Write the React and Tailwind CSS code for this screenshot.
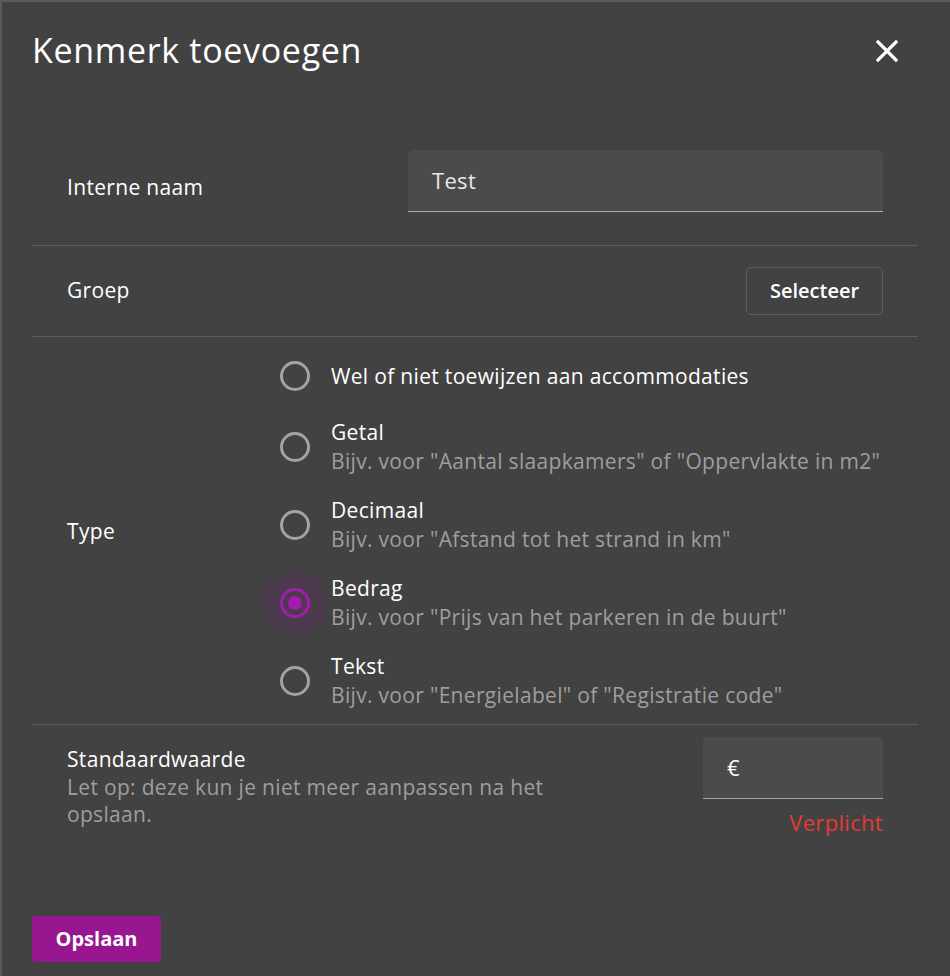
import React from "react";

const options = [
  { title: "Wel of niet toewijzen aan accommodaties" },
  { title: "Getal", desc: 'Bijv. voor "Aantal slaapkamers" of "Oppervlakte in m2"' },
  { title: "Decimaal", desc: 'Bijv. voor "Afstand tot het strand in km"' },
  { title: "Bedrag", desc: 'Bijv. voor "Prijs van het parkeren in de buurt"', checked: true },
  { title: "Tekst", desc: 'Bijv. voor "Energielabel" of "Registratie code"' },
];

function Radio({ checked }) {
  if (checked) {
    return (
      <div className="relative w-[30px] h-[30px] shrink-0">
        <div className="absolute left-[-17px] top-[-17px] w-[64px] h-[64px] rounded-full bg-[#4e3a4e]" />
        <div className="absolute inset-0 rounded-full border-[3px] border-[#a21caf] flex items-center justify-center">
          <div className="w-[14px] h-[14px] rounded-full bg-[#a21caf]" />
        </div>
      </div>
    );
  }
  return <div className="w-[30px] h-[30px] shrink-0 rounded-full border-[3px] border-[#a3a3a3]" />;
}

export default function App() {
  return (
    <div
      className="w-[950px] h-[976px] bg-[#424242] border-t-2 border-l-2 border-[#5a5a5a] flex flex-col text-white tracking-[0.02em]"
      style={{ fontFamily: "'Open Sans', Lato, sans-serif" }}
    >
      <div className="h-[128px] shrink-0 flex items-start justify-between pl-[30px] pr-[52px] pt-[24px]">
        <h1 className="text-[34px] leading-[48px] font-normal tracking-[0.02em]">Kenmerk toevoegen</h1>
        <svg className="mt-[14px]" width="22" height="22" viewBox="0 0 22 22">
          <path d="M2 2 L20 20 M20 2 L2 20" stroke="white" strokeWidth="3.2" strokeLinecap="square" />
        </svg>
      </div>

      <div className="ml-[30px] mr-[32px] flex flex-col">
        <div className="h-[116px] flex items-start border-b border-[#5c5c5c]">
          <div className="w-[376px] pl-[35px] h-[116px] flex items-center text-[21px] font-medium">Interne naam</div>
          <div className="mt-[20px] w-[475px] h-[62px] bg-[#4b4b4b] rounded-t-[5px] border-b border-[#a8a8a8] flex items-center pl-[24px] text-[22px] text-[#e8e8e8]">
            Test
          </div>
        </div>

        <div className="h-[91px] flex items-center justify-between border-b border-[#5c5c5c] pl-[35px] pr-[35px]">
          <div className="text-[21px] font-medium">Groep</div>
          <button className="w-[137px] h-[48px] border border-[#5e5e5e] rounded-[5px] text-[20px] font-semibold text-white tracking-normal">
            Selecteer
          </button>
        </div>

        <div className="flex items-center border-b border-[#5c5c5c] pt-[17px] pb-[14px]">
          <div className="w-[248px] pl-[35px] text-[21px] font-medium">Type</div>
          <div className="flex flex-col gap-[20px]">
            {options.map((o, i) => (
              <div key={i} className={`flex items-center gap-[21px] ${o.desc ? "h-[58px]" : "h-[44px]"}`}>
                <Radio checked={o.checked} />
                <div className="flex flex-col">
                  <div className="text-[21px] leading-[29px] font-medium">{o.title}</div>
                  {o.desc && <div className="text-[21px] leading-[29px] text-[#9e9e9e]">{o.desc}</div>}
                </div>
              </div>
            ))}
          </div>
        </div>

        <div className="flex justify-between pt-[12px] pl-[35px] pr-[35px]">
          <div className="w-[560px] pt-[8px]">
            <div className="text-[21px] leading-[29px] font-medium">Standaardwaarde</div>
            <div className="text-[21px] leading-[27px] text-[#9e9e9e]">
              Let op: deze kun je niet meer aanpassen na het opslaan.
            </div>
          </div>
          <div className="flex flex-col items-end">
            <div className="w-[180px] h-[62px] bg-[#4b4b4b] rounded-t-[5px] border-b border-[#a8a8a8] flex items-center pl-[24px] text-[22px]">
              €
            </div>
            <div className="mt-[10px] text-[22px] leading-[26px] text-[#e53935]">Verplicht</div>
          </div>
        </div>
      </div>

      <div className="mt-auto pl-[30px] pb-[14px]">
        <button className="w-[129px] h-[46px] rounded-[4px] bg-[#98168f] text-white text-[20px] font-bold tracking-normal">
          Opslaan
        </button>
      </div>
    </div>
  );
}
